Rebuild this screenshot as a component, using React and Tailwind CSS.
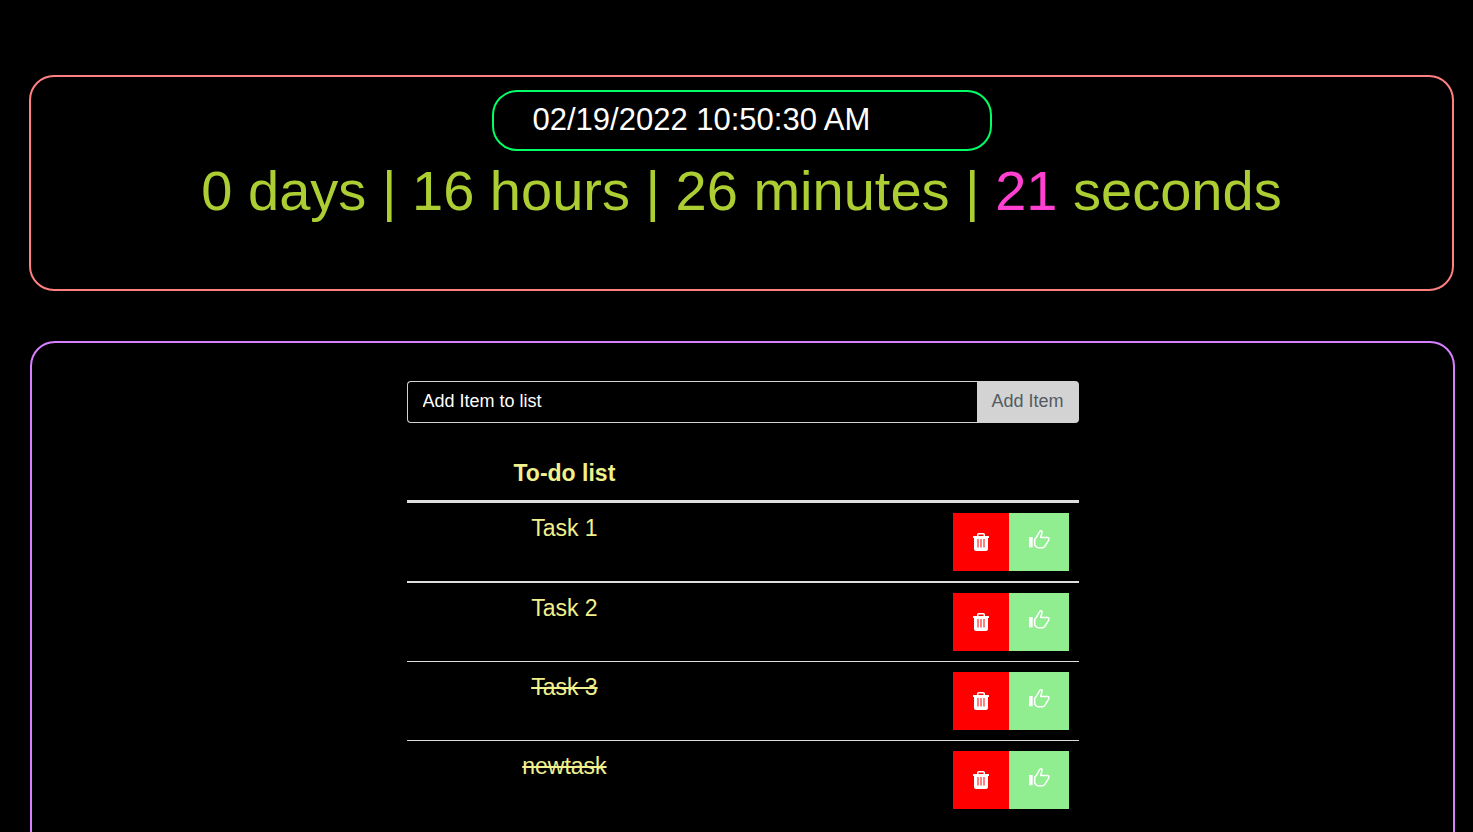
import React from "react";

const tasks = [
  { name: "Task 1", done: false },
  { name: "Task 2", done: false },
  { name: "Task 3", done: true },
  { name: "newtask", done: true },
];

function TrashIcon() {
  return (
    <svg width="16" height="18" viewBox="0 0 16 18" aria-hidden="true">
      <path
        fill="#fff"
        fillRule="evenodd"
        d="M4 3V1.800C4 .8 4.800 0 5.800 0h4.400C11.200 0 12 .8 12 1.800V3h3.400c.4 0 .6.200.6.600V5h-1v11c0 1.100-.9 2-2 2H3c-1.100 0-2-.9-2-2V5H0V3.600C0 3.200.2 3 .6 3zM5.500 3h5V1.500h-5zM4.500 6v8.500h1V6zM7.500 6v8.500h1V6zM10.500 6v8.500h1V6z"
      />
    </svg>
  );
}

function ThumbIcon() {
  return (
    <svg width="22" height="19" viewBox="0 0 22 19" aria-hidden="true">
      <path fill="#fff" d="M1 7h3.700v10.300H1z" />
      <path
        fill="none"
        stroke="#fff"
        strokeWidth="1.500"
        strokeLinejoin="round"
        d="M6.700 9.300 8.500 7.200 11.200 2.300C11.700 1.200 12.400.8 13.200.8c.7 0 1 .6.800 1.500L12.700 7.500h6.800c1.100 0 1.600.8 1.400 1.700-.1.900-.6 1.700-1.100 2.500l-3.200 5c-.5.800-1.100 1.100-2 1.100H10.200c-.7 0-1.200-.3-1.700-.8L6.700 15.200z"
      />
    </svg>
  );
}

export default function App() {
  return (
    <main className="flex min-h-screen flex-col bg-black pt-[75px] font-['Liberation_Sans',Arial,sans-serif]">
      <section className="mr-[19px] ml-[29px] flex min-h-[216px] flex-col items-center rounded-[25px] border-2 border-[#ff8080] pt-[13px]">
        <div className="w-full max-w-[500px] rounded-[25px] border-2 border-[#00ff66] px-[39px] pt-[7px] pb-[9px]">
          <time className="block text-[31px] leading-[41px] text-white">02/19/2022 10:50:30 AM</time>
        </div>
        <h1 className="mt-2 text-center text-[56px] leading-[64px] text-[#acce32]">
          0 days | 16 hours | 26 minutes | <span className="text-[#ff40d0]">21</span> seconds
        </h1>
      </section>

      <section className="mt-[50px] mr-[18px] ml-[30px] rounded-[25px] border-2 border-[#d67fff] pt-[38px] pb-[38px]">
        <div className="mx-auto w-full max-w-[672px]">
          <form className="flex h-[42px]" onSubmit={(e) => e.preventDefault()}>
            <input
              type="text"
              aria-label="Add Item to list"
              placeholder="Add Item to list"
              className="min-w-0 flex-1 rounded-l-[4px] border border-r-0 border-[#d3d3d3] bg-black px-[15px] pb-[2px] text-[18px] text-white outline-none placeholder:text-white"
            />
            <button
              type="submit"
              className="w-[102px] rounded-r-[4px] bg-[#d3d3d3] pb-[2px] text-[18px] text-[#545b62]"
            >
              Add Item
            </button>
          </form>

          <table className="mt-[27px] w-full table-fixed border-collapse text-[23px] leading-[30px] text-[#f0f08c]">
            <colgroup>
              <col className="w-[47%]" />
              <col />
            </colgroup>
            <thead>
              <tr className="border-b-[3px] border-[#dedede]">
                <th scope="col" className="pt-2 pb-3 text-center font-bold">To-do list</th>
                <td />
              </tr>
            </thead>
            <tbody>
              {tasks.map((task) => (
                <tr key={task.name} className="border-b border-[#dedede] first:border-b-2 last:border-b-0">
                  <td className={task.done ? "p-[10px] text-center align-top line-through" : "p-[10px] text-center align-top"}>
                    {task.name}
                  </td>
                  <td className="p-[10px]">
                    <div className="flex h-[58px] justify-end">
                      <button
                        type="button"
                        aria-label={`Delete ${task.name}`}
                        className="flex w-14 items-center justify-center bg-[#ff0000]"
                      >
                        <TrashIcon />
                      </button>
                      <button
                        type="button"
                        aria-label={`Complete ${task.name}`}
                        className="flex w-[60px] items-center justify-center bg-[#90ee90] pb-[6px]"
                      >
                        <ThumbIcon />
                      </button>
                    </div>
                  </td>
                </tr>
              ))}
            </tbody>
          </table>
        </div>
      </section>
    </main>
  );
}
